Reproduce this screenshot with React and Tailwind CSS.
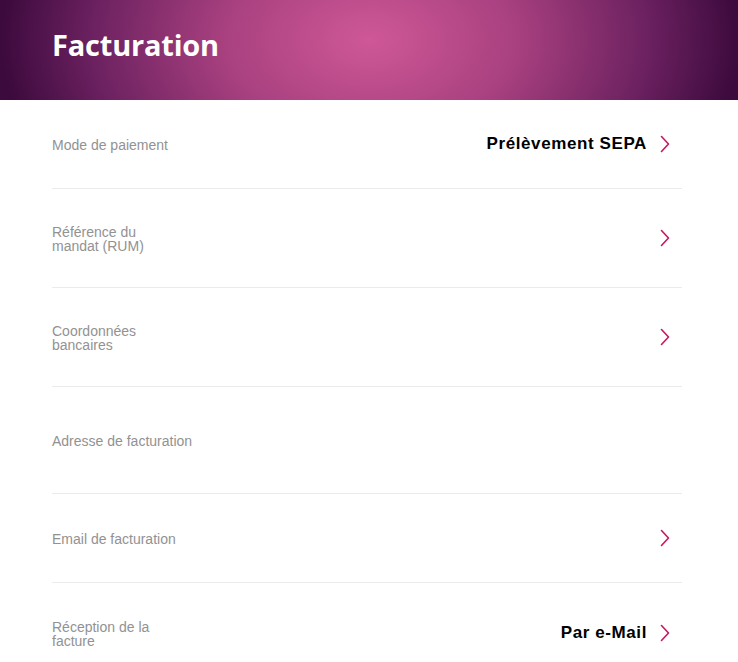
import React from 'react'

const rows = [
  { label: 'Mode de paiement', value: 'Prélèvement SEPA', chevron: true, h: 'h-[89px]', w: 'w-[130px]' },
  { label: 'Référence du mandat (RUM)', value: '', chevron: true, h: 'h-[99px]', w: 'w-[130px]' },
  { label: 'Coordonnées bancaires', value: '', chevron: true, h: 'h-[99px]', w: 'w-[130px]' },
  { label: 'Adresse de facturation', value: '', chevron: false, h: 'h-[107px]', w: 'w-[170px]' },
  { label: 'Email de facturation', value: '', chevron: true, h: 'h-[89px]', w: 'w-[170px]' },
  { label: 'Réception de la facture', value: 'Par e-Mail', chevron: true, h: 'h-[99px]', w: 'w-[130px]' },
]

function Chevron() {
  return (
    <svg width="10" height="18" viewBox="0 0 10 18" fill="none" aria-hidden="true">
      <polyline points="1.5,1.5 8.5,9 1.5,16.5" stroke="#c4185f" strokeWidth="1.6" strokeLinecap="round" strokeLinejoin="round" />
    </svg>
  )
}

export default function App() {
  return (
    <div className="min-h-[662px] bg-white font-['Liberation_Sans',Arial,sans-serif]">
      <header className="flex h-[100px] items-center bg-[radial-gradient(ellipse_370px_240px_at_370px_40px,#cf5897_0%,#a8407f_40%,#6c2160_75%,#3c0a3d_100%)] px-[52px] pb-[10px]">
        <h1 className="font-['Open_Sans',sans-serif] text-[29px] font-bold tracking-[-0.2px] text-white">Facturation</h1>
      </header>
      <div className="px-[52px] pr-[56px]">
        {rows.map((row, i) => (
          <div
            key={row.label}
            className={`flex items-center justify-between ${row.h} ${i < rows.length - 1 ? 'border-b border-[#ebebeb]' : ''}`}
          >
            <div className={`${row.w} pt-[2px] text-[14px] leading-[14px] text-[#929292]`}>{row.label}</div>
            <div className="flex items-center gap-[13px] pr-[12px]">
              {row.value && <span className="text-[17px] font-bold tracking-[0.6px] text-black">{row.value}</span>}
              {row.chevron && <Chevron />}
            </div>
          </div>
        ))}
      </div>
    </div>
  )
}
